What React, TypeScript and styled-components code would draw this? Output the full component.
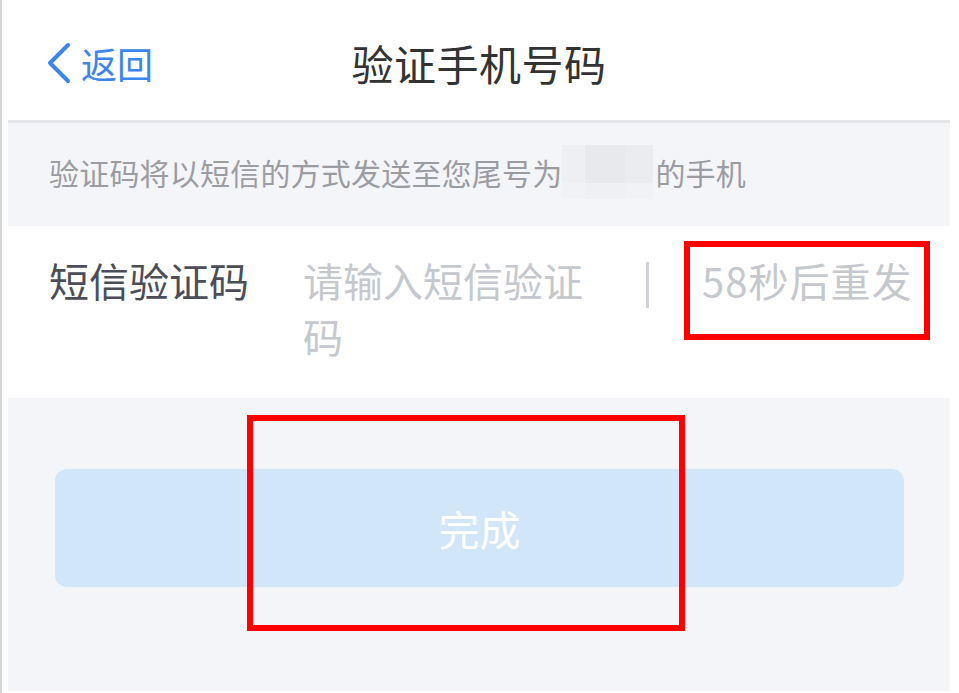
import React from "react";
import styled, { createGlobalStyle } from "styled-components";

const GlobalStyle = createGlobalStyle`
  html, body {
    margin: 0;
    padding: 0;
    background: #ffffff;
    overflow: hidden;
  }
  body {
    font-family: "Noto Sans CJK SC", "Noto Sans", sans-serif;
  }
`;

const Page = styled.div`
  position: relative;
  width: 959px;
  height: 693px;
  box-sizing: border-box;
  border-left: 2px solid #d6d6d7;
  padding-left: 6px;
  padding-right: 9px;
  background: #ffffff;
  display: flex;
  flex-direction: column;
`;

const Header = styled.header`
  height: 123px;
  box-sizing: border-box;
  padding-top: 5px;
  display: grid;
  grid-template-columns: 1fr auto 1fr;
  align-items: center;
  border-bottom: 3px solid #e4e5ea;
  background: #ffffff;
`;

const Back = styled.div`
  display: flex;
  align-items: center;
  gap: 9px;
  padding-left: 38px;
  color: #3d85ee;
  font-size: 36px;
  line-height: 1;
`;

const Title = styled.h1`
  margin: 0;
  font-size: 42px;
  font-weight: 400;
  color: #333333;
  line-height: 1;
  letter-spacing: 0.5px;
`;

const Hint = styled.div`
  height: 103px;
  box-sizing: border-box;
  padding: 0 0 6px 41px;
  background: #f4f5f9;
  display: flex;
  align-items: center;
  font-size: 30px;
  color: #9b9ca2;
  letter-spacing: 0.2px;
`;

const Masked = styled.span`
  display: inline-grid;
  grid-template-columns: 23px 40px 28px;
  grid-template-rows: 38px 16px;
  width: 91px;
  height: 54px;
  margin: 0 2px 0 0;
  background: #eff0f3;
`;

const MaskCell = styled.span<{ $shade: string }>`
  background: ${(p) => p.$shade};
`;

const InputRow = styled.div`
  height: 172px;
  box-sizing: border-box;
  padding: 26px 0 0 41px;
  display: flex;
  align-items: flex-start;
  background: #ffffff;
  font-size: 40px;
  line-height: 56px;
`;

const Label = styled.div`
  width: 254px;
  flex: none;
  color: #4b4e58;
`;

const Placeholder = styled.div`
  width: 300px;
  flex: none;
  color: #c5c8ce;
`;

const VDivider = styled.div`
  width: 3px;
  height: 46px;
  margin: 10px 53px 0 43px;
  background: #cfd1d6;
  flex: none;
`;

const Countdown = styled.div`
  color: #c5c8ce;
  white-space: nowrap;
  letter-spacing: 1px;
`;

const Footer = styled.div`
  flex: 1;
  margin-bottom: 2px;
  background: #f4f5f9;
  padding: 71px 46px 0 47px;
`;

const DoneButton = styled.button`
  display: flex;
  align-items: center;
  justify-content: center;
  width: 100%;
  height: 118px;
  border: none;
  border-radius: 12px;
  background: #d1e6f8;
  color: #ffffff;
  font-family: "Noto Sans CJK SC", "Noto Sans", sans-serif;
  font-size: 41px;
  padding: 0;
`;

const Annotation = styled.div<{ $x: number; $y: number; $w: number; $h: number }>`
  position: absolute;
  left: ${(p) => p.$x}px;
  top: ${(p) => p.$y}px;
  width: ${(p) => p.$w}px;
  height: ${(p) => p.$h}px;
  box-sizing: border-box;
  border: 6px solid #ff0000;
  pointer-events: none;
`;

const Chevron = () => (
  <svg width="26" height="42" viewBox="0 0 26 42" fill="none">
    <path
      d="M22 3 L4 21 L22 39"
      stroke="#3d85ee"
      strokeWidth="4"
      strokeLinecap="round"
      strokeLinejoin="round"
    />
  </svg>
);

export default function App() {
  return (
    <>
      <GlobalStyle />
      <Page>
        <Header>
          <Back>
            <Chevron />
            <span>返回</span>
          </Back>
          <Title>验证手机号码</Title>
          <div />
        </Header>
        <Hint>
          验证码将以短信的方式发送至您尾号为
          <Masked>
            <MaskCell $shade="#eeeff2" />
            <MaskCell $shade="#e8e9ec" />
            <MaskCell $shade="#ebecef" />
            <MaskCell $shade="#f1f2f5" />
            <MaskCell $shade="#eff0f3" />
            <MaskCell $shade="#f1f2f5" />
          </Masked>
          的手机
        </Hint>
        <InputRow>
          <Label>短信验证码</Label>
          <Placeholder>请输入短信验证码</Placeholder>
          <VDivider />
          <Countdown>58秒后重发</Countdown>
        </InputRow>
        <Footer>
          <DoneButton>完成</DoneButton>
        </Footer>
        <Annotation $x={682} $y={241} $w={246} $h={99} />
        <Annotation $x={245} $y={415} $w={438} $h={216} />
      </Page>
    </>
  );
}
